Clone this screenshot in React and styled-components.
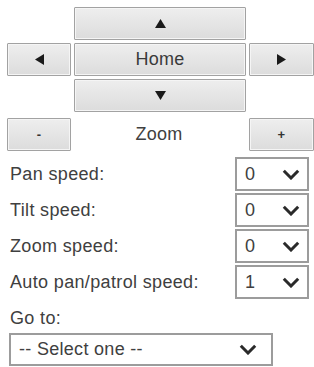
import React from 'react';
import styled, { createGlobalStyle } from 'styled-components';

const GlobalStyle = createGlobalStyle`
  html, body {
    margin: 0;
    padding: 0;
    background: #ffffff;
  }
  body {
    font-family: "Liberation Sans", Arial, sans-serif;
    color: #404040;
  }
`;

const Panel = styled.main`
  width: 314px;
  padding: 7px 0 0 7px;
  box-sizing: border-box;
`;

const PadGrid = styled.div`
  display: grid;
  grid-template-columns: 64px 172px 65px;
  grid-auto-rows: 33px;
  column-gap: 3px;
  row-gap: 3px;
`;

const ZoomRow = styled(PadGrid)`
  margin-top: 6px;
  align-items: center;
`;

const PadButton = styled.button`
  grid-column: ${({ col }) => col};
  box-sizing: border-box;
  height: 33px;
  margin: 0;
  padding: 0;
  display: flex;
  align-items: center;
  justify-content: center;
  border: 1px solid #a2a2a2;
  border-radius: 1px;
  background: linear-gradient(#eeeeee, #dcdcdc);
  box-shadow: inset 0 0 0 1px #f5f5f5;
  font-family: "Liberation Sans", Arial, sans-serif;
  font-size: 18px;
  letter-spacing: 0.3px;
  color: #3a3a3a;
  cursor: pointer;
`;

const Tiny = styled.span`
  font-size: 13px;
  font-weight: bold;
  color: #333;
  line-height: 1;
`;

const ZoomLabel = styled.span`
  grid-column: 2;
  text-align: center;
  font-size: 18px;
  letter-spacing: 0.3px;
  color: #404040;
  padding-right: 2px;
`;

const Settings = styled.div`
  margin-top: 6px;
  display: flex;
  flex-direction: column;
  gap: 2px;
`;

const SpeedRow = styled.div`
  display: flex;
  align-items: center;
  justify-content: space-between;
  width: 302px;
  height: 34px;
`;

const Label = styled.span`
  padding-left: 3px;
  font-size: 18px;
  letter-spacing: 0.35px;
  color: #404040;
`;

const SelectBox = styled.div`
  box-sizing: border-box;
  width: ${({ w }) => w}px;
  height: ${({ h }) => h || 34}px;
  display: flex;
  align-items: center;
  justify-content: space-between;
  padding: 0 7px 0 8px;
  border: 2px solid #9c9c9c;
  background: #ffffff;
  font-size: 18px;
  letter-spacing: 0.3px;
  color: #404040;
`;

const GoTo = styled.div`
  margin-top: 8px;
  display: flex;
  flex-direction: column;
  gap: 4px;
`;

const GoLabel = styled(Label)`
  line-height: 22px;
`;

const GoSelect = styled(SelectBox)`
  margin-left: 2px;
  padding-right: 14px;
`;

const Chevron = () => (
  <svg width="18" height="11" viewBox="0 0 18 11">
    <polyline points="1.8,1.8 9,9 16.2,1.8" fill="none" stroke="#2a2a2a" strokeWidth="3" strokeLinejoin="miter" />
  </svg>
);

const Tri = ({ dir }) => {
  const pts = {
    up: '0,9 5.5,0 11,9',
    down: '0,0 11,0 5.5,9',
    left: '9,0 9,11 0,5.5',
    right: '0,0 0,11 9,5.5',
  }[dir];
  const horiz = dir === 'left' || dir === 'right';
  return (
    <svg width={horiz ? 9 : 11} height={horiz ? 11 : 9} viewBox={horiz ? '0 0 9 11' : '0 0 11 9'}>
      <polygon points={pts} fill="#1a1a1a" />
    </svg>
  );
};

const speeds = [
  { label: 'Pan speed:', value: '0' },
  { label: 'Tilt speed:', value: '0' },
  { label: 'Zoom speed:', value: '0' },
  { label: 'Auto pan/patrol speed:', value: '1' },
];

const App = () => (
  <>
    <GlobalStyle />
    <Panel>
      <PadGrid>
        <PadButton col={2}><Tri dir="up" /></PadButton>
        <PadButton col={1}><Tri dir="left" /></PadButton>
        <PadButton col={2}>Home</PadButton>
        <PadButton col={3}><Tri dir="right" /></PadButton>
        <PadButton col={2}><Tri dir="down" /></PadButton>
      </PadGrid>
      <ZoomRow>
        <PadButton col={1}><Tiny>-</Tiny></PadButton>
        <ZoomLabel>Zoom</ZoomLabel>
        <PadButton col={3}><Tiny>+</Tiny></PadButton>
      </ZoomRow>
      <Settings>
        {speeds.map((s) => (
          <SpeedRow key={s.label}>
            <Label>{s.label}</Label>
            <SelectBox w={74}>
              <span>{s.value}</span>
              <Chevron />
            </SelectBox>
          </SpeedRow>
        ))}
      </Settings>
      <GoTo>
        <GoLabel>Go to:</GoLabel>
        <GoSelect w={264} h={33}>
          <span>-- Select one --</span>
          <Chevron />
        </GoSelect>
      </GoTo>
    </Panel>
  </>
);

export default App;
